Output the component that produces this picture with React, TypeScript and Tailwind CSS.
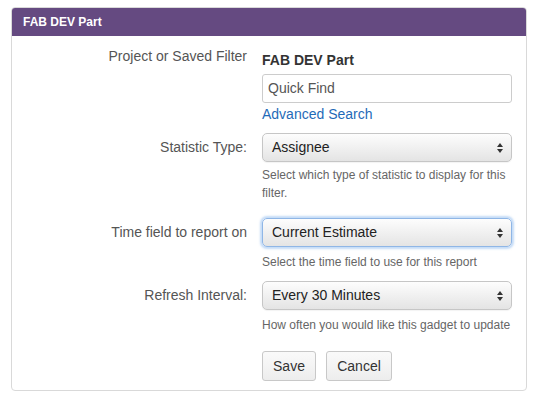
import React from 'react'

// Up/down arrows drawn like the native mac select control
function SelectArrows() {
  return (
    <svg width="6" height="11" viewBox="0 0 6 11" className="absolute right-[8px] top-1/2 -translate-y-1/2">
      <path d="M3 0.5 L6 4.5 L0 4.5 Z" fill="#333" />
      <path d="M3 10.5 L6 6.5 L0 6.5 Z" fill="#333" />
    </svg>
  )
}

function FakeSelect({ value, focused }: { value: string; focused?: boolean }) {
  return (
    <div
      className={`relative flex h-[29px] w-[250px] items-center rounded-[5px] border bg-gradient-to-b from-[#fdfdfd] to-[#e4e4e4] pl-[9px] text-[14px] text-[#222] ${
        focused
          ? 'border-[#8fb6e6] shadow-[0_0_2px_2px_rgba(140,185,240,0.5)]'
          : 'border-[#c6c6c6] shadow-[0_1px_1px_rgba(0,0,0,0.05)]'
      }`}
    >
      {value}
      <SelectArrows />
    </div>
  )
}

function Row({ label, children, labelPad }: { label: string; children: React.ReactNode; labelPad: string }) {
  return (
    <div className="flex">
      <div className={`w-[235px] shrink-0 text-right text-[14px] leading-[20px] text-[#555] ${labelPad}`}>{label}</div>
      <div className="ml-[15px] w-[250px]">{children}</div>
    </div>
  )
}

export default function App() {
  return (
    <div className="h-[401px] w-[540px] bg-white pt-[7px] pl-[11px] font-['Liberation_Sans',Arial,sans-serif]">
      <div className="w-[516px] overflow-hidden rounded-[4px] border border-[#d9d9d9]">
        <div className="flex h-[28px] items-center bg-[#654a81] pl-[11px] text-[12px] font-bold text-white">
          FAB DEV Part
        </div>
        <div className="pt-[10px] pb-[9px]">
          <Row label="Project or Saved Filter" labelPad="pt-0">
            <div className="pt-[4px] text-[14px] font-bold leading-[20px] text-[#333]">FAB DEV Part</div>
            <div className="mt-[4px] flex h-[29px] items-center rounded-[3px] border border-[#ccc] bg-white pl-[5px] text-[14px] text-[#555]">
              Quick Find
            </div>
            <div className="mt-[2px] text-[14px] leading-[18px] text-[#1f6bb8]">Advanced Search</div>
          </Row>

          <div className="mt-[10px]">
            <Row label="Statistic Type:" labelPad="pt-[4px]">
              <FakeSelect value="Assignee" />
              <div className="mt-[4px] text-[12px] leading-[18px] text-[#666]">
                Select which type of statistic to display for this filter.
              </div>
            </Row>
          </div>

          <div className="mt-[16px]">
            <Row label="Time field to report on" labelPad="pt-[4px]">
              <FakeSelect value="Current Estimate" focused />
              <div className="mt-[6px] text-[12px] leading-[18px] text-[#666]">
                Select the time field to use for this report
              </div>
            </Row>
          </div>

          <div className="mt-[10px]">
            <Row label="Refresh Interval:" labelPad="pt-[4px]">
              <FakeSelect value="Every 30 Minutes" />
              <div className="mt-[6px] text-[12px] leading-[18px] text-[#666]">
                How often you would like this gadget to update
              </div>
            </Row>
          </div>

          <div className="mt-[17px] flex pl-[250px]">
            <button className="h-[30px] w-[54px] rounded-[3px] border border-[#c8c8c8] bg-gradient-to-b from-[#fafafa] to-[#ededed] text-[14px] text-[#333]">
              Save
            </button>
            <button className="ml-[10px] h-[30px] w-[66px] rounded-[3px] border border-[#c8c8c8] bg-gradient-to-b from-[#fafafa] to-[#ededed] text-[14px] text-[#333]">
              Cancel
            </button>
          </div>
        </div>
      </div>
    </div>
  )
}
